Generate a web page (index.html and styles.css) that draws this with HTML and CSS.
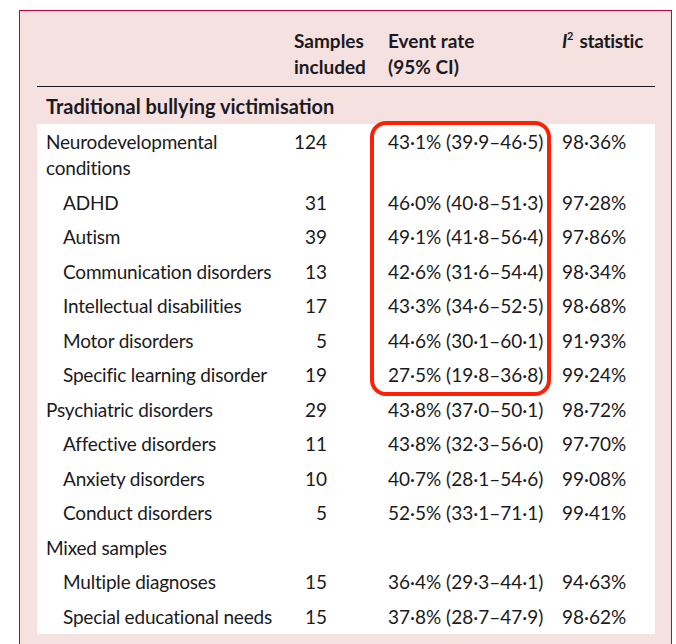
FILE: index.html
```html
<!DOCTYPE html>
<html>
<head>
<meta charset="utf-8">
<link rel="stylesheet" href="styles.css">
</head>
<body>
<div class="panel">
  <div class="head grid">
    <div></div>
    <div class="h-samples">Samples<br>included</div>
    <div class="h-event">Event rate<br>(95% CI)</div>
    <div class="h-i2"><i>I</i><sup>2</sup> statistic</div>
  </div>
  <div class="section">Traditional bullying victimisation</div>
  <div class="card">
    <div class="highlight"></div>
    <div class="row grid"><div class="lab">Neurodevelopmental<br>conditions</div><div class="n">124</div><div class="ev">43·1% (39·9–46·5)</div><div class="i2">98·36%</div></div>
    <div class="row grid"><div class="lab sub">ADHD</div><div class="n">31</div><div class="ev">46·0% (40·8–51·3)</div><div class="i2">97·28%</div></div>
    <div class="row grid"><div class="lab sub">Autism</div><div class="n">39</div><div class="ev">49·1% (41·8–56·4)</div><div class="i2">97·86%</div></div>
    <div class="row grid"><div class="lab sub">Communication disorders</div><div class="n">13</div><div class="ev">42·6% (31·6–54·4)</div><div class="i2">98·34%</div></div>
    <div class="row grid"><div class="lab sub">Intellectual disabilities</div><div class="n">17</div><div class="ev">43·3% (34·6–52·5)</div><div class="i2">98·68%</div></div>
    <div class="row grid"><div class="lab sub">Motor disorders</div><div class="n">5</div><div class="ev">44·6% (30·1–60·1)</div><div class="i2">91·93%</div></div>
    <div class="row grid"><div class="lab sub">Specific learning disorder</div><div class="n">19</div><div class="ev">27·5% (19·8–36·8)</div><div class="i2">99·24%</div></div>
    <div class="row grid"><div class="lab">Psychiatric disorders</div><div class="n">29</div><div class="ev">43·8% (37·0–50·1)</div><div class="i2">98·72%</div></div>
    <div class="row grid"><div class="lab sub">Affective disorders</div><div class="n">11</div><div class="ev">43·8% (32·3–56·0)</div><div class="i2">97·70%</div></div>
    <div class="row grid"><div class="lab sub">Anxiety disorders</div><div class="n">10</div><div class="ev">40·7% (28·1–54·6)</div><div class="i2">99·08%</div></div>
    <div class="row grid"><div class="lab sub">Conduct disorders</div><div class="n">5</div><div class="ev">52·5% (33·1–71·1)</div><div class="i2">99·41%</div></div>
    <div class="row grid"><div class="lab">Mixed samples</div><div class="n"></div><div class="ev"></div><div class="i2"></div></div>
    <div class="row grid"><div class="lab sub">Multiple diagnoses</div><div class="n">15</div><div class="ev">36·4% (29·3–44·1)</div><div class="i2">94·63%</div></div>
    <div class="row grid"><div class="lab sub">Special educational needs</div><div class="n">15</div><div class="ev">37·8% (28·7–47·9)</div><div class="i2">98·62%</div></div>
  </div>
  <div class="section">Traditional bullying perpetration</div>
</div>
</body>
</html>
```

FILE: styles.css
```css
html, body {
  margin: 0;
  padding: 0;
  background: #ffffff;
}
body {
  font-family: Lato, "Open Sans", sans-serif;
  font-size: 19px;
  line-height: 26px;
  color: #1b1a20;
}
.panel {
  margin: 10px 0 0 19px;
  width: 653px;
  box-sizing: border-box;
  border: 1px solid #c2003b;
  border-bottom: none;
  background: #f6e1e1;
  padding: 17px 16px 40px 17px;
}
.grid {
  display: grid;
  grid-template-columns: 248px 33px 235px 1fr;
}
.head {
  padding: 0 0 6px 9px;
  border-bottom: 1px solid #1b1a20;
  font-weight: 700;
}
.h-samples {
  white-space: nowrap;
}
.h-event {
  padding-left: 61px;
  white-space: nowrap;
}
.h-i2 {
  white-space: nowrap;
  letter-spacing: -0.3px;
}
.h-i2 sup {
  font-size: 11px;
  line-height: 0;
  vertical-align: 8px;
  margin: 0 2px 0 0;
}
.section {
  font-weight: 700;
  font-size: 20px;
  padding: 6px 0 0 9px;
  margin-bottom: 5px;
}
.card {
  position: relative;
  background: #ffffff;
  padding: 0.75px 0 0 9px;
}
.row {
  padding: 4.25px 0;
}
.lab {
  letter-spacing: -0.2px;
}
.sub {
  padding-left: 17px;
}
.n {
  text-align: right;
}
.ev {
  padding-left: 61px;
  white-space: nowrap;
}
.i2 {
  white-space: nowrap;
}
.highlight {
  position: absolute;
  left: 333px;
  top: -3px;
  width: 181px;
  height: 275px;
  box-sizing: border-box;
  border: 4px solid #fa2106;
  border-radius: 16px;
  pointer-events: none;
}
```
